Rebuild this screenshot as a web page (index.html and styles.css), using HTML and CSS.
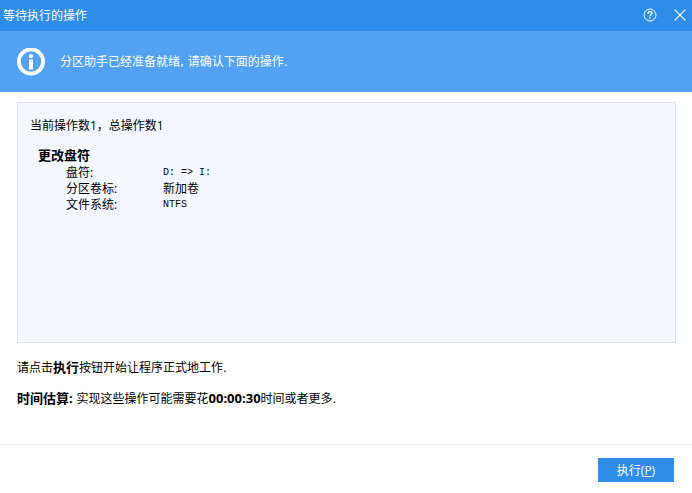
FILE: index.html
```
<!DOCTYPE html>
<html lang="zh-CN">
<head>
    <meta charset="UTF-8">
    <meta name="viewport" content="width=device-width, initial-scale=1.0">
    <title>等待执行的操作</title>
    <link rel="stylesheet" href="styles.css">
</head>
<body>
    <div class="dialog">
        <header class="titlebar">
            <h1>等待执行的操作</h1>
            <div class="window-buttons">
                <button class="icon-btn" type="button" aria-label="帮助">
                    <svg width="14" height="14" viewBox="0 0 14 14" fill="none" stroke="#fff">
                        <circle cx="7" cy="7" r="6"/>
                        <path d="M5 5.7V5.3C5 4.2 5.8 3.7 7 3.7s2 .6 2 1.6C9 6.6 7 6.6 7 8.2" stroke-width="1.3"/>
                        <path d="M7 9.3v1.3" stroke-width="1.5"/>
                    </svg>
                </button>
                <button class="icon-btn" type="button" aria-label="关闭">
                    <svg width="12" height="12" viewBox="0 0 12 12" fill="none" stroke="#fff">
                        <path d="M.7.7l10.6 10.6M11.3.7L.7 11.3" stroke-width="1.2"/>
                    </svg>
                </button>
            </div>
        </header>

        <div class="banner">
            <svg class="info-icon" width="28" height="28" viewBox="0 0 28 28">
                <circle cx="14" cy="13.5" r="12.1" fill="none" stroke="#fff" stroke-width="3.8"/>
                <circle cx="14" cy="8.2" r="2.1" fill="#fff"/>
                <path d="M12 11.5h4V21.5h-4z" fill="#fff"/>
            </svg>
            <p>分区助手已经准备就绪, 请确认下面的操作.</p>
        </div>

        <main class="content">
            <section class="operations">
                <p>当前操作数1，总操作数1</p>
                <h2>更改盘符</h2>
                <table class="details">
                    <tr>
                        <th scope="row">盘符:</th>
                        <td class="mono">D: =&gt; I:</td>
                    </tr>
                    <tr>
                        <th scope="row">分区卷标:</th>
                        <td>新加卷</td>
                    </tr>
                    <tr>
                        <th scope="row">文件系统:</th>
                        <td class="mono">NTFS</td>
                    </tr>
                </table>
            </section>
            <p class="note">请点击<b>执行</b>按钮开始让程序正式地工作.</p>
            <p class="note"><b>时间估算:</b> 实现这些操作可能需要花<b>00:00:30</b>时间或者更多.</p>
        </main>

        <footer class="footer">
            <button class="run-btn" type="button" accesskey="p">执行(<u>P</u>)</button>
        </footer>
    </div>
</body>
</html>
```
FILE: styles.css
```
* {
    margin: 0;
    padding: 0;
    box-sizing: border-box;
}

body {
    font-family: 'DejaVu Sans', 'Noto Sans CJK SC', sans-serif;
    font-size: 12px;
    line-height: 16px;
    color: #000;
    background: #fff;
}

.dialog {
    min-height: 100vh;
    display: flex;
    flex-direction: column;
}

.titlebar {
    display: flex;
    justify-content: space-between;
    align-items: center;
    height: 31px;
    padding: 0 6px 0 3px;
    background: #2d8de8;
    color: #fff;
}

.titlebar h1 {
    font-size: 12px;
    font-weight: normal;
}

.window-buttons {
    display: flex;
    gap: 17px;
    padding-bottom: 2px;
}

.icon-btn {
    display: flex;
    align-items: center;
    background: none;
    border: none;
    cursor: pointer;
}

.banner {
    display: flex;
    align-items: center;
    gap: 15px;
    height: 61px;
    padding: 0 17px;
    background: #53a1f3;
    color: #fff;
}

.content {
    flex: 1;
    display: flex;
    flex-direction: column;
    padding: 10px 16px 37px 17px;
}

.operations {
    flex: 1;
    margin-bottom: 16px;
    padding: 15px 12px;
    background: #f4f7ff;
    border: 1px solid #dce1ec;
    font-family: 'Open Sans', 'Noto Sans CJK SC', sans-serif;
}

.operations h2 {
    margin: 13px 0 0 8px;
    font-size: 13px;
    line-height: 16px;
}

.details {
    margin: 2px 0 0 36px;
    border-collapse: collapse;
}

.details th {
    width: 97px;
    text-align: left;
    font-weight: normal;
}

.details .mono {
    font-family: 'Liberation Mono', monospace;
    font-size: 10px;
}

.note + .note {
    margin-top: 14px;
}

.note b {
    font-family: 'Open Sans', 'Noto Sans CJK SC', sans-serif;
    font-size: 13px;
}

.footer {
    display: flex;
    justify-content: flex-end;
    padding: 13px 18px 11px;
    border-top: 1px solid #e3eaf3;
}

.run-btn {
    width: 76px;
    height: 24px;
    background: #2d8de8;
    border: none;
    color: #fff;
    font-family: 'Open Sans', 'Noto Sans CJK SC', sans-serif;
    font-size: 12px;
    cursor: pointer;
}

.run-btn:hover {
    background: #53a1f3;
}
```
